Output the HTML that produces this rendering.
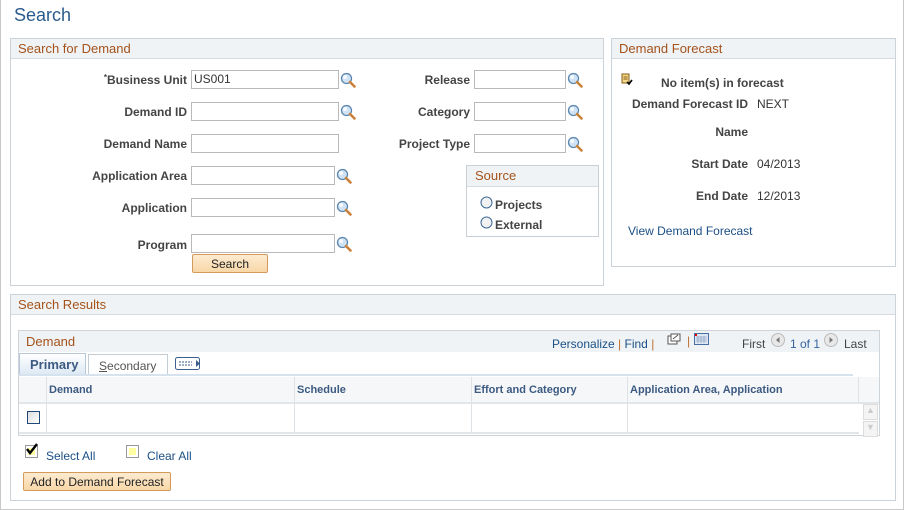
<!DOCTYPE html>
<html><head><style>
*{box-sizing:border-box;margin:0;padding:0}
body{width:904px;height:510px;background:#fff;font-family:"Liberation Sans",Arial,sans-serif;font-size:12px;color:#333;position:relative;overflow:hidden}
.a{position:absolute}
.box{position:absolute;border:1px solid #cbd3d9;background:#fff}
.hd{position:absolute;left:0;right:0;top:0;height:20px;background:#eff3f5;border-bottom:1px solid #d5dbe0;color:#a5521b;font-size:13px;padding:2px 0 0 7px}
.lbl{position:absolute;font-weight:bold;text-align:right;color:#444;font-size:12px}
.inp{position:absolute;height:19px;border:1px solid #b9b9b9;background:#fff;font-size:12px;padding:1px 2px;color:#333}
.mg{position:absolute;width:16px;height:16px}
.lnk{color:#1b4f86}
.btn{position:absolute;border:1px solid #d49a5a;background:linear-gradient(#fdebd0,#f8d7a8);border-radius:2px;text-align:center;font-size:12px;color:#222;padding-top:2px}
.th{position:absolute;top:0;height:26px;border-right:1px solid #dde2e6;font-weight:bold;color:#3c5a82;font-size:11px;padding:7px 0 0 2px}
</style></head><body>
<div class="a" style="left:0;top:0;width:904px;height:510px;border:1px solid #c9c9c9;border-top:none"></div>
<div class="a" style="left:14px;top:5px;font-size:18px;color:#2a5b8c">Search</div>

<svg width="0" height="0" style="position:absolute"><defs><g id="mg"><circle cx="6.5" cy="6.5" r="5" fill="#cfe3f5" stroke="#5a86b0" stroke-width="1.3"/><circle cx="5" cy="5" r="2" fill="#fff" opacity=".8"/><path d="M10 10l4.5 4.5" stroke="#c8823a" stroke-width="2.6" stroke-linecap="round"/></g></defs></svg>

<div class="box" style="left:10px;top:38px;width:594px;height:248px"><div class="hd">Search for Demand</div></div>
<div class="lbl" style="left:40px;top:73px;width:147px"><span style="font-size:8px;vertical-align:top">*</span>Business Unit</div>
<div class="inp" style="left:191px;top:70px;width:148px">US001</div>
<svg class="mg" style="left:340px;top:72px"><use href="#mg"/></svg>
<div class="lbl" style="left:40px;top:105px;width:147px">Demand ID</div>
<div class="inp" style="left:191px;top:102px;width:148px"></div>
<svg class="mg" style="left:340px;top:104px"><use href="#mg"/></svg>
<div class="lbl" style="left:40px;top:137px;width:147px">Demand Name</div>
<div class="inp" style="left:191px;top:134px;width:148px"></div>
<div class="lbl" style="left:40px;top:169px;width:147px">Application Area</div>
<div class="inp" style="left:191px;top:166px;width:144px"></div>
<svg class="mg" style="left:336px;top:168px"><use href="#mg"/></svg>
<div class="lbl" style="left:40px;top:201px;width:147px">Application</div>
<div class="inp" style="left:191px;top:198px;width:144px"></div>
<svg class="mg" style="left:336px;top:200px"><use href="#mg"/></svg>
<div class="lbl" style="left:40px;top:238px;width:147px">Program</div>
<div class="inp" style="left:191px;top:234px;width:144px"></div>
<svg class="mg" style="left:336px;top:236px"><use href="#mg"/></svg>
<div class="btn" style="left:192px;top:254px;width:76px;height:19px">Search</div>

<div class="lbl" style="left:380px;top:73px;width:90px">Release</div>
<div class="inp" style="left:474px;top:70px;width:92px"></div>
<svg class="mg" style="left:567px;top:72px"><use href="#mg"/></svg>
<div class="lbl" style="left:380px;top:105px;width:90px">Category</div>
<div class="inp" style="left:474px;top:102px;width:92px"></div>
<svg class="mg" style="left:567px;top:104px"><use href="#mg"/></svg>
<div class="lbl" style="left:380px;top:137px;width:90px">Project Type</div>
<div class="inp" style="left:474px;top:134px;width:92px"></div>
<svg class="mg" style="left:567px;top:136px"><use href="#mg"/></svg>

<div class="box" style="left:466px;top:165px;width:133px;height:72px;border-color:#c8d0d6"><div class="hd" style="height:21px;padding-left:8px">Source</div></div>
<svg class="a" style="left:480px;top:196px" width="13" height="13"><circle cx="6.5" cy="6.5" r="5.5" fill="#f2f2f2" stroke="#3d6a9a"/></svg>
<div class="a" style="left:495px;top:198px;font-weight:bold;font-size:12px;color:#444">Projects</div>
<svg class="a" style="left:480px;top:216px" width="13" height="13"><circle cx="6.5" cy="6.5" r="5.5" fill="#f2f2f2" stroke="#3d6a9a"/></svg>
<div class="a" style="left:495px;top:218px;font-weight:bold;font-size:12px;color:#444">External</div>

<div class="box" style="left:611px;top:38px;width:285px;height:229px"><div class="hd">Demand Forecast</div></div>
<svg class="a" style="left:621px;top:73px" width="12" height="13"><rect x="1" y="1" width="7" height="9" fill="#f3d98a" stroke="#8a5a18"/><path d="M2.5 4h4M2.5 6h4" stroke="#8a5a18"/><path d="M6 9l2 2 3-4" stroke="#000" stroke-width="1.6" fill="none"/></svg>
<div class="a" style="left:661px;top:76px;font-weight:bold;color:#444">No item(s) in forecast</div>
<div class="lbl" style="left:620px;top:97px;width:128px">Demand Forecast ID</div><div class="a" style="left:757px;top:97px">NEXT</div>
<div class="lbl" style="left:620px;top:125px;width:128px">Name</div>
<div class="lbl" style="left:620px;top:157px;width:128px">Start Date</div><div class="a" style="left:757px;top:157px">04/2013</div>
<div class="lbl" style="left:620px;top:189px;width:128px">End Date</div><div class="a" style="left:757px;top:189px">12/2013</div>
<div class="a lnk" style="left:628px;top:224px">View Demand Forecast</div>

<div class="box" style="left:10px;top:294px;width:886px;height:207px"><div class="hd">Search Results</div></div>

<div class="box" style="left:18px;top:330px;width:862px;height:106px;border-color:#cdd5db"></div>
<div class="a" style="left:19px;top:331px;width:860px;height:21px;background:#eff3f5"></div>
<div class="a" style="left:26px;top:334px;font-size:13px;color:#a5521b">Demand</div>
<div class="a" style="left:552px;top:337px"><span class="lnk">Personalize</span> <span style="color:#c07030">|</span> <span class="lnk">Find</span> <span style="color:#c07030">|</span></div>
<svg class="a" style="left:667px;top:333px" width="14" height="12"><rect x="1" y="3" width="9" height="8" fill="#fff" stroke="#555"/><rect x="4" y="1" width="9" height="7" fill="#fff" stroke="#555"/><path d="M6 6l5-4" stroke="#555"/></svg>
<div class="a" style="left:687px;top:334px;color:#c07030">|</div>
<svg class="a" style="left:694px;top:333px" width="15" height="12"><rect x=".5" y=".5" width="14" height="11" fill="#dde6f3" stroke="#4a6fa5"/><path d="M2 4h11M2 6h11M2 8h11M4 3v7M7 3v7M10 3v7" stroke="#7d93b8" stroke-width=".6"/><rect x="1" y="1" width="2" height="2" fill="#e00"/></svg>
<div class="a" style="left:742px;top:337px;color:#444">First</div>
<svg class="a" style="left:771px;top:333px" width="14" height="14"><circle cx="7" cy="7" r="6.5" fill="#e8e8e8" stroke="#bbb"/><path d="M8.5 4v6L5 7z" fill="#777"/></svg>
<div class="a lnk" style="left:790px;top:337px;color:#3565a0">1 of 1</div>
<svg class="a" style="left:824px;top:333px" width="14" height="14"><circle cx="7" cy="7" r="6.5" fill="#e8e8e8" stroke="#bbb"/><path d="M5.5 4v6L9 7z" fill="#777"/></svg>
<div class="a" style="left:844px;top:337px;color:#444">Last</div>

<div class="a" style="left:19px;top:353px;width:67px;height:22px;background:linear-gradient(#fff,#dce8f3);border:1px solid #b8c8d8;border-bottom:none;font-weight:bold;color:#3c5a82;font-size:13px;padding:3px 0 0 10px">Primary</div>
<div class="a" style="left:88px;top:354px;width:80px;height:21px;border:1px solid #c4ccd4;border-bottom:none;color:#555;font-size:12px;padding:4px 0 0 10px"><u>S</u>econdary</div>
<svg class="a" style="left:175px;top:357px" width="28" height="14"><rect x=".5" y=".5" width="24" height="12" rx="2" fill="#fff" stroke="#3b5f8f"/><path d="M4 5h13M4 8h13" stroke="#3b5f8f" stroke-dasharray="2 1"/><path d="M21 3v7l4-3.5z" fill="#3b5f8f"/></svg>
<div class="a" style="left:19px;top:374px;width:834px;height:2px;background:#d6e3ee"></div>

<div class="a" style="left:19px;top:377px;width:860px;height:27px;background:#f6f7f8;border-bottom:2px solid #e3e6e9">
<div class="th" style="left:0;width:28px"></div>
<div class="th" style="left:28px;width:248px">Demand</div>
<div class="th" style="left:276px;width:177px">Schedule</div>
<div class="th" style="left:453px;width:156px">Effort and Category</div>
<div class="th" style="left:609px;width:231px">Application Area, Application</div>
</div>
<div class="a" style="left:46px;top:404px;width:1px;height:28px;background:#dde2e6"></div>
<div class="a" style="left:294px;top:404px;width:1px;height:28px;background:#dde2e6"></div>
<div class="a" style="left:471px;top:404px;width:1px;height:28px;background:#dde2e6"></div>
<div class="a" style="left:627px;top:404px;width:1px;height:28px;background:#dde2e6"></div>
<div class="a" style="left:19px;top:432px;width:840px;height:2px;background:#e3e6e9"></div>
<div class="a" style="left:27px;top:411px;width:13px;height:13px;border:1px solid #1f4a7a;background:linear-gradient(135deg,#ddd,#fff)"></div>
<div class="a" style="left:863px;top:404px;width:15px;height:16px;border:1px solid #ddd;background:#f4f4f4;color:#ccc;font-size:9px;text-align:center">▲</div>
<div class="a" style="left:863px;top:421px;width:15px;height:16px;border:1px solid #ddd;background:#f4f4f4;color:#ccc;font-size:9px;text-align:center">▼</div>

<div class="a" style="left:25px;top:445px;width:13px;height:13px;border:1px solid #999;background:#ffffa0;box-shadow:inset 0 0 0 2px #fff"></div>
<svg class="a" style="left:25px;top:443px" width="14" height="14"><path d="M2 6l3 4 7-9" stroke="#000" stroke-width="2.4" fill="none"/></svg>
<div class="a lnk" style="left:46px;top:449px">Select All</div>
<div class="a" style="left:126px;top:445px;width:13px;height:13px;border:1px solid #999;background:#ffffa0;box-shadow:inset 0 0 0 2px #fff"></div>
<div class="a lnk" style="left:147px;top:449px">Clear All</div>
<div class="btn" style="left:23px;top:472px;width:148px;height:19px">Add to Demand Forecast</div>
</body></html>
